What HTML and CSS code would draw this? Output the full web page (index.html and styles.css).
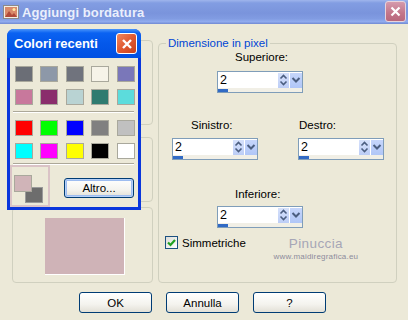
FILE: index.html
```html
<!DOCTYPE html>
<html>
<head>
    <title>Aggiungi bordatura</title>
    <link rel="stylesheet" href="styles.css">
</head>
<body>
    <div class="window">
        <div class="titlebar">
            <svg class="app-icon" width="16" height="14" viewBox="0 0 16 14">
                <rect x="0.5" y="0.5" width="15" height="13" fill="#f3efe4" stroke="#8a8a8a"/>
                <rect x="2" y="2" width="12" height="10" fill="#d98a6a"/>
                <path d="M2 12 L6 6 L9 10 L11 8 L14 12 Z" fill="#b04a3a"/>
                <circle cx="11" cy="4.5" r="1.5" fill="#ffe8a0"/>
            </svg>
            <span class="title">Aggiungi bordatura</span>
            <div class="close-btn main-close">
                <svg width="11" height="11" viewBox="0 0 11 11"><path d="M1.5 1.5 L9.5 9.5 M9.5 1.5 L1.5 9.5" stroke="#fff" stroke-width="2.2"/></svg>
            </div>
        </div>

        <div class="client">
            <div class="panes">
                <div class="left-col">
                    <div class="group g-top"></div>
                    <div class="group g-mid"></div>
                    <div class="group g-bottom">
                        <div class="preview"></div>
                    </div>
                </div>

                <fieldset class="dims">
                    <legend>Dimensione in pixel</legend>

                    <div class="lbl lbl-sup">Superiore:</div>
                    <div class="spin spin-center">
                        <div class="spin-main">
                            <span class="spin-val">2</span>
                            <span class="spin-ud">
                                <svg width="11" height="14" viewBox="0 0 11 14"><path d="M2.5 5.5 L5.5 2.5 L8.5 5.5 M2.5 8.5 L5.5 11.5 L8.5 8.5" fill="none" stroke="#4b5e80" stroke-width="1.6"/></svg>
                            </span>
                            <span class="spin-dd">
                                <svg width="12" height="14" viewBox="0 0 12 14"><path d="M2.5 5 L6 8.5 L9.5 5" fill="none" stroke="#4b5e80" stroke-width="2"/></svg>
                            </span>
                        </div>
                        <div class="spin-strip"><span class="spin-bar"></span></div>
                    </div>

                    <div class="pair">
                        <div class="pair-cell">
                            <div class="lbl lbl-sin">Sinistro:</div>
                            <div class="spin">
                                <div class="spin-main">
                                    <span class="spin-val">2</span>
                                    <span class="spin-ud">
                                        <svg width="11" height="14" viewBox="0 0 11 14"><path d="M2.5 5.5 L5.5 2.5 L8.5 5.5 M2.5 8.5 L5.5 11.5 L8.5 8.5" fill="none" stroke="#4b5e80" stroke-width="1.6"/></svg>
                                    </span>
                                    <span class="spin-dd">
                                        <svg width="12" height="14" viewBox="0 0 12 14"><path d="M2.5 5 L6 8.5 L9.5 5" fill="none" stroke="#4b5e80" stroke-width="2"/></svg>
                                    </span>
                                </div>
                                <div class="spin-strip"><span class="spin-bar"></span></div>
                            </div>
                        </div>
                        <div class="pair-cell">
                            <div class="lbl lbl-des">Destro:</div>
                            <div class="spin">
                                <div class="spin-main">
                                    <span class="spin-val">2</span>
                                    <span class="spin-ud">
                                        <svg width="11" height="14" viewBox="0 0 11 14"><path d="M2.5 5.5 L5.5 2.5 L8.5 5.5 M2.5 8.5 L5.5 11.5 L8.5 8.5" fill="none" stroke="#4b5e80" stroke-width="1.6"/></svg>
                                    </span>
                                    <span class="spin-dd">
                                        <svg width="12" height="14" viewBox="0 0 12 14"><path d="M2.5 5 L6 8.5 L9.5 5" fill="none" stroke="#4b5e80" stroke-width="2"/></svg>
                                    </span>
                                </div>
                                <div class="spin-strip"><span class="spin-bar"></span></div>
                            </div>
                        </div>
                    </div>

                    <div class="lbl lbl-inf">Inferiore:</div>
                    <div class="spin spin-center spin-inf">
                        <div class="spin-main">
                            <span class="spin-val">2</span>
                            <span class="spin-ud">
                                <svg width="11" height="14" viewBox="0 0 11 14"><path d="M2.5 5.5 L5.5 2.5 L8.5 5.5 M2.5 8.5 L5.5 11.5 L8.5 8.5" fill="none" stroke="#4b5e80" stroke-width="1.6"/></svg>
                            </span>
                            <span class="spin-dd">
                                <svg width="12" height="14" viewBox="0 0 12 14"><path d="M2.5 5 L6 8.5 L9.5 5" fill="none" stroke="#4b5e80" stroke-width="2"/></svg>
                            </span>
                        </div>
                        <div class="spin-strip"><span class="spin-bar"></span></div>
                    </div>

                    <div class="check-row">
                        <span class="checkbox">
                            <svg width="11" height="11" viewBox="0 0 11 11"><path d="M2 5.5 L4.5 8 L9 3" fill="none" stroke="#21a121" stroke-width="2.2"/></svg>
                        </span>
                        <span class="check-label">Simmetriche</span>
                        <div class="watermark">
                            <span class="wm-name">Pinuccia</span>
                            <span class="wm-site">www.maidiregrafica.eu</span>
                        </div>
                    </div>
                </fieldset>
            </div>

            <div class="buttons">
                <button class="btn">OK</button>
                <button class="btn">Annulla</button>
                <button class="btn">?</button>
            </div>
        </div>

        <div class="popup">
            <div class="popup-title">
                <span class="popup-caption">Colori recenti</span>
                <div class="close-btn popup-close">
                    <svg width="12" height="12" viewBox="0 0 12 12"><path d="M2 2 L10 10 M10 2 L2 10" stroke="#fff" stroke-width="2.4"/></svg>
                </div>
            </div>
            <div class="popup-body">
                <div class="swatches">
                    <span class="sw" style="background:#6b6e76"></span>
                    <span class="sw" style="background:#8d98a8"></span>
                    <span class="sw" style="background:#70737d"></span>
                    <span class="sw" style="background:#f6f3e8"></span>
                    <span class="sw" style="background:#7a77b9"></span>
                    <span class="sw" style="background:#c8789c"></span>
                    <span class="sw" style="background:#8a2d6c"></span>
                    <span class="sw" style="background:#b9d3d3"></span>
                    <span class="sw" style="background:#2f7b70"></span>
                    <span class="sw" style="background:#5cdcdc"></span>
                </div>
                <div class="sep"></div>
                <div class="swatches swatches-2">
                    <span class="sw" style="background:#ff0000"></span>
                    <span class="sw" style="background:#00ff00"></span>
                    <span class="sw" style="background:#0000ff"></span>
                    <span class="sw" style="background:#808080"></span>
                    <span class="sw" style="background:#c0c0c0"></span>
                    <span class="sw" style="background:#00ffff"></span>
                    <span class="sw" style="background:#ff00ff"></span>
                    <span class="sw" style="background:#ffff00"></span>
                    <span class="sw" style="background:#000000"></span>
                    <span class="sw" style="background:#ffffff"></span>
                </div>
                <div class="sep sep-2"></div>
                <div class="popup-bottom">
                    <div class="recent">
                        <span class="recent-bg"></span>
                        <span class="recent-fg"></span>
                    </div>
                    <button class="btn btn-altro">Altro...</button>
                </div>
            </div>
        </div>
    </div>
</body>
</html>
```

FILE: styles.css
```css
:root {
    --face: #ece9d8;
    --group-line: #d0d0bf;
    --xp-blue: #0a36dc;
}

body {
    margin: 0;
    font-family: 'Liberation Sans', Arial, sans-serif;
    font-size: 11px;
    color: #000;
}

.window {
    position: relative;
    width: 408px;
    height: 320px;
    background-color: var(--face);
    overflow: hidden;
}

/* main title bar (inactive XP look) */
.titlebar {
    height: 24px;
    display: flex;
    align-items: center;
    background: linear-gradient(#9fb5ec 0, #829de2 3px, #7a94dc 55%, #819ce2 78%, #91abee 90%, #7089d2 100%);
}

.app-icon {
    margin-left: 3px;
    margin-right: 3px;
}

.title {
    flex: 1;
    color: #eaeffc;
    font-weight: bold;
    font-size: 13px;
    letter-spacing: 0.1px;
}

.close-btn {
    display: flex;
    align-items: center;
    justify-content: center;
    box-sizing: border-box;
    border-radius: 3px;
}

.main-close {
    width: 21px;
    height: 21px;
    margin-right: 2px;
    margin-top: -2px;
    background: linear-gradient(#d59aac, #c27589 60%, #b8687d);
    border: 1px solid #e8d4dc;
}

/* dialog client area */
.client {
    padding: 12px 11px 0 12px;
}

.panes {
    display: flex;
    height: 247px;
}

.left-col {
    width: 141px;
    display: flex;
    flex-direction: column;
}

.group {
    box-sizing: border-box;
    border: 1px solid var(--group-line);
    border-radius: 4px;
}

.g-top {
    margin-top: 4px;
    height: 85px;
}

.g-mid {
    margin-top: 12px;
    height: 65px;
}

.g-bottom {
    margin-top: 5px;
    flex: 1;
    padding: 10px 0 0 32px;
}

.preview {
    width: 80px;
    height: 57px;
    box-sizing: border-box;
    background-color: #cfb3b7;
    border-right: 1px solid #fff;
    border-bottom: 1px solid #fff;
}

.dims {
    margin: 0 0 0 5px;
    padding: 0;
    width: 239px;
    box-sizing: border-box;
    border: 1px solid var(--group-line);
    border-radius: 4px;
    min-width: 0;
}

.dims legend {
    margin-left: 7px;
    padding: 0 2px;
    color: #0046d5;
    line-height: 14px;
    font-size: 11.5px;
}

.lbl {
    line-height: 14px;
    font-size: 11.5px;
}

.lbl-sup {
    margin-left: 76px;
}

.lbl-inf {
    margin-top: 27px;
    margin-left: 76px;
}

.spin {
    width: 86px;
    height: 22px;
    box-sizing: border-box;
    border: 1px solid #7f9db9;
    background: #fff;
    display: flex;
    flex-direction: column;
}

.spin-center {
    margin-top: 7px;
    margin-left: 58px;
}

.spin-inf {
    margin-top: 5px;
}

.spin-main {
    height: 16px;
    display: flex;
    align-items: center;
}

.spin-val {
    flex: 1;
    padding-left: 2px;
    font-size: 12.5px;
    line-height: 16px;
}

.spin-ud {
    width: 11px;
    height: 15px;
    display: flex;
    align-items: center;
    background: linear-gradient(#d6e1fb, #bccdf6);
}

.spin-dd {
    width: 12px;
    height: 15px;
    margin-left: 1px;
    display: flex;
    align-items: center;
    background: linear-gradient(#c6d6fb, #b0c6f7);
}

.spin-strip {
    flex: 1;
    background: #f1efe6;
    display: flex;
    align-items: flex-end;
}

.spin-bar {
    width: 10px;
    height: 3px;
    background: #316ac5;
}

.pair {
    display: flex;
    margin-top: 25px;
    margin-left: 13px;
    gap: 40px;
}

.pair-cell .spin {
    margin-top: 6px;
}

.lbl-sin {
    margin-left: 19px;
}

.lbl-des {
    margin-left: 1px;
}

.check-row {
    display: flex;
    align-items: flex-start;
    margin-top: 8px;
    margin-left: 6px;
}

.checkbox {
    width: 13px;
    height: 13px;
    box-sizing: border-box;
    border: 1px solid #1c5180;
    background: linear-gradient(135deg, #dcdcd7, #fff);
    display: flex;
    align-items: center;
    justify-content: center;
}

.check-label {
    margin-left: 4px;
    font-size: 11.5px;
    line-height: 14px;
}

.watermark {
    margin-left: 27px;
    width: 86px;
    display: flex;
    flex-direction: column;
    align-items: center;
}

.wm-name {
    color: #a6a6b6;
    font-size: 13.5px;
    line-height: 16px;
    letter-spacing: 0.4px;
}

.wm-site {
    color: #8c8c9c;
    font-size: 8px;
    line-height: 10px;
    letter-spacing: 0.2px;
}

/* push buttons */
.buttons {
    display: flex;
    gap: 14px;
    margin-top: 9px;
    padding-left: 67px;
}

.btn {
    width: 73px;
    height: 21px;
    padding: 0;
    font-family: 'Liberation Sans', Arial, sans-serif;
    font-size: 11.5px;
    color: #000;
    border: 1px solid #003c74;
    border-radius: 3px;
    background: linear-gradient(#ffffff, #f4f3ee 60%, #e2e0d6);
}

/* recent colours popup */
.popup {
    position: absolute;
    left: 7px;
    top: 29px;
    width: 134px;
    height: 181px;
    border-radius: 7px 7px 0 0;
    background: var(--xp-blue);
    overflow: hidden;
}

.popup-title {
    height: 29px;
    display: flex;
    align-items: center;
    padding: 0 4px 0 7px;
    background: linear-gradient(#4a94fa 0, #0a62f2 4px, #0458ea 50%, #0050e2 100%);
}

.popup-caption {
    flex: 1;
    color: #fff;
    font-weight: bold;
    font-size: 13px;
}

.popup-close {
    width: 21px;
    height: 21px;
    border: 1px solid #fff;
    background: linear-gradient(135deg, #f08860, #e05a32 50%, #c8401c);
}

.popup-body {
    margin: 0 3px;
    height: 149px;
    background: var(--face);
    padding: 8px 0 0 4.5px;
    box-sizing: border-box;
}

.swatches {
    display: grid;
    grid-template-columns: repeat(5, 18px);
    grid-auto-rows: 16px;
    column-gap: 7.5px;
    row-gap: 7px;
}

.swatches-2 {
    margin-top: 7px;
}

.sw {
    box-sizing: border-box;
    border: 1px solid #a9a89c;
}

.sep {
    margin: 6px 4px 0 -1.5px;
    height: 1px;
    border-bottom: 1px solid #fff;
    background: #aca899;
}

.sep-2 {
    margin-top: 4px;
}

.popup-bottom {
    display: flex;
    margin-left: -4.5px;
}

.recent {
    position: relative;
    width: 40px;
    height: 42px;
    box-sizing: border-box;
    border: 2px solid #dac3c6;
}

.recent-bg {
    position: absolute;
    left: 13px;
    top: 20px;
    width: 18px;
    height: 16px;
    box-sizing: border-box;
    background: #6d6d6d;
    border: 1px solid #9a9a9a;
}

.recent-fg {
    position: absolute;
    left: 2px;
    top: 8px;
    width: 18px;
    height: 17px;
    box-sizing: border-box;
    background: #d0b4b8;
    border: 1px solid #a9a89c;
}

.btn-altro {
    width: 70px;
    height: 20px;
    margin-top: 13px;
    margin-left: 14px;
    border-color: #003c74;
    box-shadow: inset 0 0 0 1px #b6d0f8, inset 0 0 0 2px #9dbcf0;
}
```
